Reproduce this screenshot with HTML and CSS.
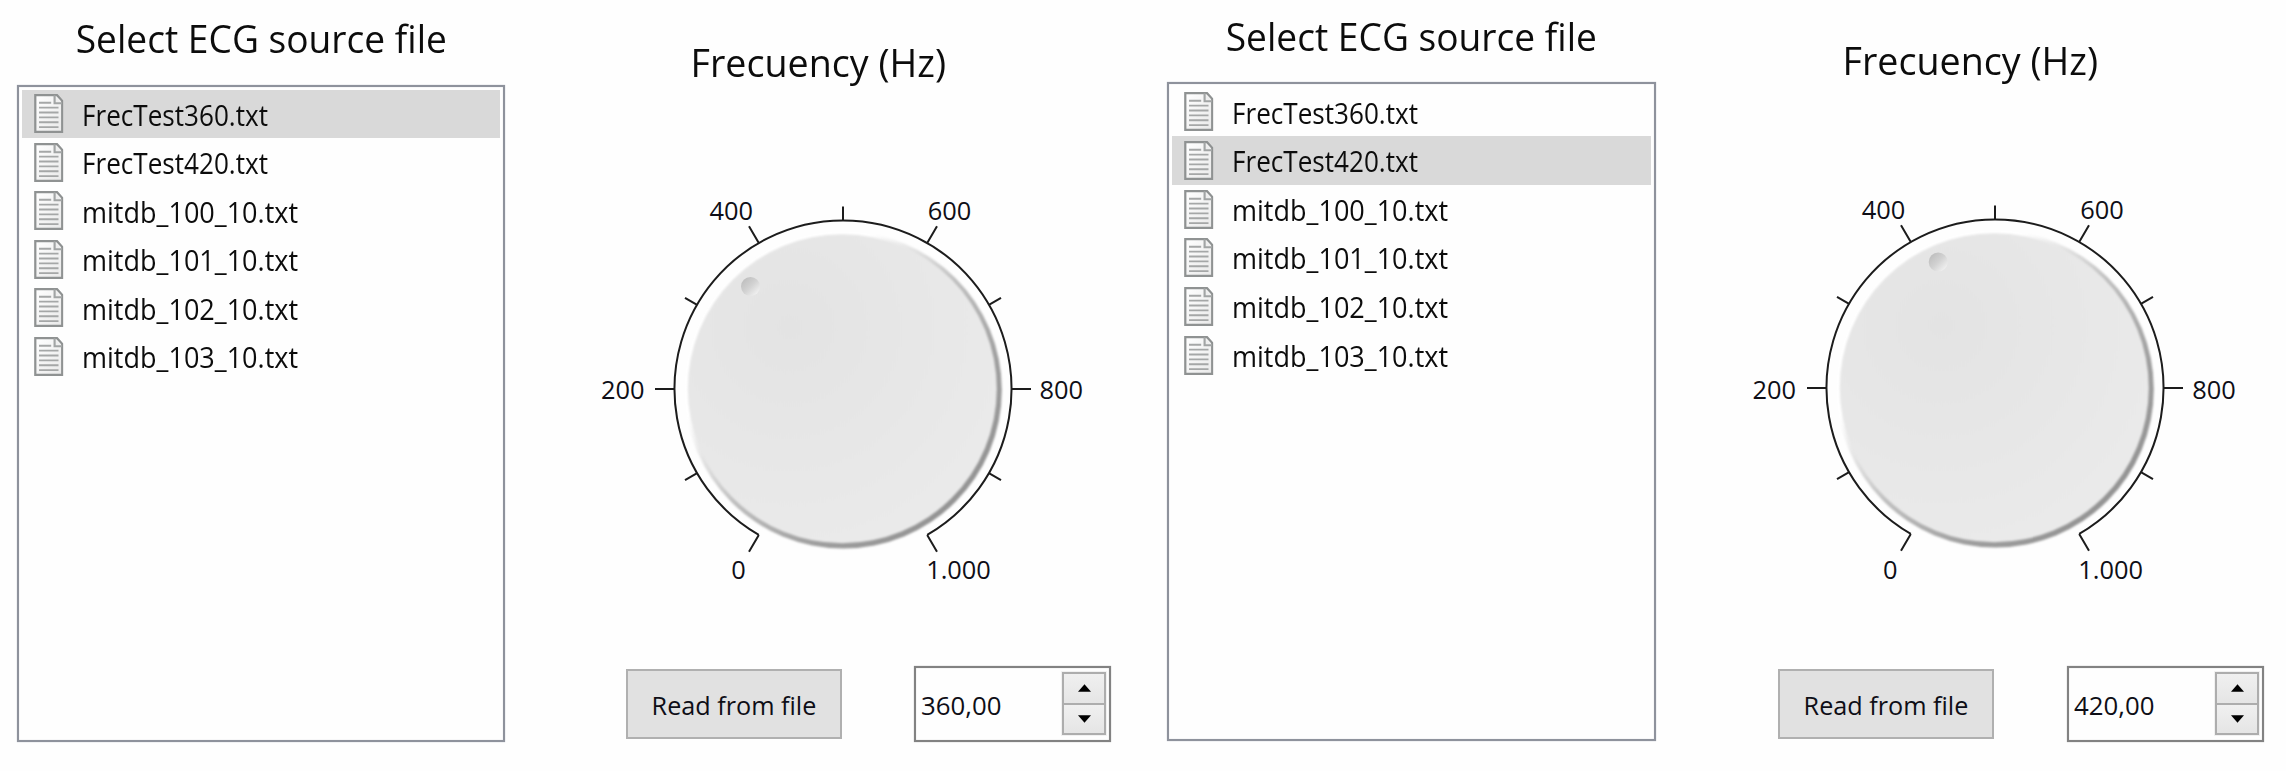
FILE: index.html
```
<!DOCTYPE html>
<html lang="en">
<head>
<meta charset="utf-8">
<title>ECG source</title>
<link rel="stylesheet" href="styles.css">
</head>
<body>
<svg class="defs" width="0" height="0" aria-hidden="true">
  <defs>
    <linearGradient id="rim" x1="0" y1="0" x2="1" y2="1">
      <stop offset=".3" stop-color="#fff"/>
      <stop offset=".38" stop-color="#e6e6e6"/>
      <stop offset=".5" stop-color="#c0c0c0"/>
      <stop offset=".7" stop-color="#9e9e9e"/>
      <stop offset=".85" stop-color="#949494"/>
    </linearGradient>
    <radialGradient id="face" cx=".33" cy=".3" r=".75">
      <stop offset="0" stop-color="#e3e3e3"/>
      <stop offset="1" stop-color="#eaeaea"/>
    </radialGradient>
    <linearGradient id="dot" x1=".1" y1=".1" x2=".9" y2=".9">
      <stop offset="0" stop-color="#bdbdbd"/>
      <stop offset=".5" stop-color="#d2d2d2"/>
      <stop offset="1" stop-color="#f3f3f3"/>
    </linearGradient>
    <linearGradient id="paper" x1="0" y1="0" x2="1" y2="1">
      <stop offset="0" stop-color="#fff"/>
      <stop offset="1" stop-color="#e9e9e9"/>
    </linearGradient>
    <filter id="soft" x="-5%" y="-5%" width="110%" height="110%"><feGaussianBlur stdDeviation=".8"/></filter>
    <symbol id="file" viewBox="0 0 30 40">
      <path d="M1.2 1.2H23.500L28.800 7V38.8H1.2Z" fill="url(#paper)" stroke="#8f9292" stroke-width="2.300"/>
      <path d="M21 1.5V9.500H28.500" fill="#eee" stroke="#a2a5a5" stroke-width="2.200"/>
      <path d="M5 9H17.500M5 14H25M5 19H25M5 24H25M5 29H25M5 34H25" stroke="#a5a7a7" stroke-width="1.900"/>
    </symbol>
    <symbol id="scale" viewBox="-250 -200 500 400">
      <g fill="none" stroke="#1c1c1c" stroke-width="2">
        <path d="M-84.2 145.900A168.500 168.500 0 1 1 84.200 145.900"/>
        <path d="M-84.200 145.900L-94 162.800M84.200 145.900L94 162.800M-168.500 0H-188M168.500 0H188M-84.200 -145.900L-94 -162.800M84.200 -145.900L94 -162.800"/>
        <path d="M0 -168.500V-182.500M-145.900 -84.200L-158 -91.200M145.900 -84.200L158 -91.200M-145.900 84.200L-158 91.200M145.900 84.200L158 91.200"/>
      </g>
      <circle r="158.500" cx=".3" cy="1" fill="url(#rim)" filter="url(#soft)"/>
      <circle r="154.500" cx="-.7" cy="-.2" fill="url(#face)" filter="url(#soft)"/>
    </symbol>
  </defs>
</svg>

<main class="panel panel-a">
  <section class="source">
    <h2 class="title"><span class="fit-title">Select ECG source file</span></h2>
    <ul class="list">
      <li class="row selected"><svg class="icon"><use href="#file"/></svg><span class="name name-frec">FrecTest360.txt</span></li>
      <li class="row"><svg class="icon"><use href="#file"/></svg><span class="name name-frec">FrecTest420.txt</span></li>
      <li class="row"><svg class="icon"><use href="#file"/></svg><span class="name">mitdb_100_10.txt</span></li>
      <li class="row"><svg class="icon"><use href="#file"/></svg><span class="name">mitdb_101_10.txt</span></li>
      <li class="row"><svg class="icon"><use href="#file"/></svg><span class="name">mitdb_102_10.txt</span></li>
      <li class="row"><svg class="icon"><use href="#file"/></svg><span class="name">mitdb_103_10.txt</span></li>
    </ul>
  </section>
  <section class="frequency">
    <h2 class="title"><span class="fit-freq">Frecuency (Hz)</span></h2>
    <svg class="dial" viewBox="-250 -200 500 400">
      <use href="#scale" x="-250" y="-200" width="500" height="400"/>
      <circle cx="-92.500" cy="-102.500" r="9.500" fill="url(#dot)"/>
      <g class="labels">
        <text x="-220.300" y="10">200</text><text x="-111.700" y="-169">400</text>
        <text x="106.500" y="-169">600</text><text x="218.300" y="10">800</text>
        <text x="-104.500" y="190">0</text><text x="115.500" y="190">1.000</text>
      </g>
    </svg>
    <div class="controls">
      <button class="read"><span class="fit-read">Read from file</span></button>
      <div class="spin">
        <span class="value">360,00</span>
        <div class="steps">
          <span class="step"><svg class="arrow" viewBox="0 0 12 7"><path d="M6 0L12 7H0Z"/></svg></span>
          <span class="step"><svg class="arrow" viewBox="0 0 12 7"><path d="M6 7L12 0H0Z"/></svg></span>
        </div>
      </div>
    </div>
  </section>
</main>

<main class="panel panel-b">
  <section class="source">
    <h2 class="title"><span class="fit-title">Select ECG source file</span></h2>
    <ul class="list">
      <li class="row"><svg class="icon"><use href="#file"/></svg><span class="name name-frec">FrecTest360.txt</span></li>
      <li class="row selected"><svg class="icon"><use href="#file"/></svg><span class="name name-frec">FrecTest420.txt</span></li>
      <li class="row"><svg class="icon"><use href="#file"/></svg><span class="name">mitdb_100_10.txt</span></li>
      <li class="row"><svg class="icon"><use href="#file"/></svg><span class="name">mitdb_101_10.txt</span></li>
      <li class="row"><svg class="icon"><use href="#file"/></svg><span class="name">mitdb_102_10.txt</span></li>
      <li class="row"><svg class="icon"><use href="#file"/></svg><span class="name">mitdb_103_10.txt</span></li>
    </ul>
  </section>
  <section class="frequency">
    <h2 class="title"><span class="fit-freq">Frecuency (Hz)</span></h2>
    <svg class="dial" viewBox="-250 -200 500 400">
      <use href="#scale" x="-250" y="-200" width="500" height="400"/>
      <circle cx="-56.800" cy="-126" r="9.500" fill="url(#dot)"/>
      <g class="labels">
        <text x="-220.800" y="10.500">200</text><text x="-111.500" y="-169">400</text>
        <text x="107" y="-169">600</text><text x="219" y="10.500">800</text>
        <text x="-104.800" y="190.500">0</text><text x="115.700" y="190.500">1.000</text>
      </g>
    </svg>
    <div class="controls">
      <button class="read"><span class="fit-read">Read from file</span></button>
      <div class="spin">
        <span class="value">420,00</span>
        <div class="steps">
          <span class="step"><svg class="arrow" viewBox="0 0 12 7"><path d="M6 0L12 7H0Z"/></svg></span>
          <span class="step"><svg class="arrow" viewBox="0 0 12 7"><path d="M6 7L12 0H0Z"/></svg></span>
        </div>
      </div>
    </div>
  </section>
</main>
</body>
</html>
```
FILE: styles.css
```
* { box-sizing: border-box; }

body {
  margin: 0;
  height: 771px;
  display: flex;
  overflow: hidden;
  background: #fefefe;
  color: #0c0c0c;
  font-family: "Open Sans", "Noto Sans", sans-serif;
}

.defs { position: absolute; }

.panel { display: flex; flex: none; }
.panel-a { width: 1150px; padding-left: 17px; }
.panel-b { width: 1136px; padding-left: 17px; }

.source { flex: none; width: 488px; padding-top: 16px; }
.panel-b .source { width: 489px; padding-top: 14px; }

.title {
  margin: 0;
  height: 44px;
  line-height: 44px;
  font-size: 38.7px;
  font-weight: 400;
  white-space: nowrap;
  display: flex;
  justify-content: center;
}

.fit-title { transform: scaleX(.96); }
.fit-freq { transform: scaleX(.973); }

.list {
  list-style: none;
  margin: 25px 0 0;
  padding: 2.5px 3px;
  height: 657px;
  border: 2px solid #8e929c;
  box-shadow: 0 0 1px #b4b8c0, inset 0 0 1px #b4b8c0;
}
.panel-b .list { margin-top: 24px; height: 659px; padding-top: 3.5px; }

.row {
  display: flex;
  align-items: center;
  height: 48.5px;
  padding-left: 12px;
}
.panel-b .row { height: 48.65px; }
.row.selected { background: #d9d9d9; }

.icon { width: 29.5px; height: 39px; flex: none; }

.name {
  margin-left: 18.5px;
  padding-top: 1.5px;
  font-size: 29.4px;
  line-height: 46px;
  white-space: nowrap;
  transform: scaleX(.92);
  transform-origin: left;
}
.name-frec { transform: scaleX(.888); }

.frequency {
  flex: none;
  width: 500px;
  margin-left: 88px;
  padding-top: 40px;
}
.panel-b .frequency { margin-left: 89px; padding-top: 38px; }

.frequency .title { padding-right: 49px; }

.dial {
  display: block;
  width: 500px;
  height: 400px;
  margin-top: 105px;
  overflow: visible;
}
.panel-b .dial { margin-top: 106px; }

.labels {
  font-size: 25.4px;
  text-anchor: middle;
  fill: #0e0e16;
}

.controls {
  display: flex;
  align-items: center;
  margin: 77px 0 0 33px;
  height: 76px;
  color: #0e0e16;
}
.panel-b .controls { margin-top: 78px; }

.read {
  flex: none;
  width: 216px;
  height: 70px;
  padding: 0;
  border: 2px solid #b0b0b0;
  background: #e1e1e1;
  color: inherit;
  font: 25.2px/36px "Open Sans", "Noto Sans", sans-serif;
  white-space: nowrap;
}
.fit-read { display: inline-block; padding: 1px 0 0 0; }

.spin {
  flex: none;
  display: flex;
  justify-content: space-between;
  width: 197px;
  height: 76px;
  margin-left: 72px;
  padding: 4px 3px 5px 5px;
  border: 2px solid #828282;
  box-shadow: 0 0 1px #aaa, inset 0 0 1px #aaa;
}
.panel-b .spin { margin-left: 73px; }

.value { font-size: 25.8px; line-height: 66px; }

.steps {
  display: flex;
  flex-direction: column;
  width: 44px;
  height: 63px;
  border: 2px solid #adadad;
  box-shadow: 0 0 0 1px #f1f1f1;
}

.step {
  flex: 1;
  display: flex;
  align-items: center;
  justify-content: center;
  background: linear-gradient(#f0f0f0, #e5e5e5);
}
.step + .step { border-top: 2px solid #adadad; }

.arrow { width: 13px; height: 8px; fill: #000; }
```
